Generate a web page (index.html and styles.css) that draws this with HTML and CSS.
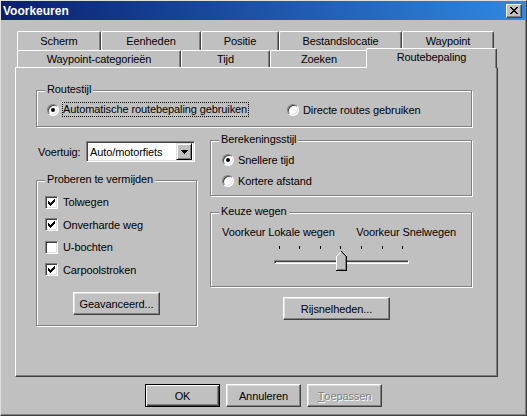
FILE: index.html
```html
<!DOCTYPE html>
<html lang="nl">
<head>
    <meta charset="UTF-8">
    <title>Voorkeuren</title>
    <link rel="stylesheet" href="styles.css">
</head>
<body>
<div class="window">
    <div class="titlebar">
        <span class="title">Voorkeuren</span>
        <span class="close-btn">
            <svg width="8" height="7" viewBox="0 0 8 7"><path d="M0 0h2v1h-2z M6 0h2v1h-2z M1 1h2v1h-2z M5 1h2v1h-2z M2 2h4v1h-4z M3 3h2v1h-2z M2 4h4v1h-4z M1 5h2v1h-2z M5 5h2v1h-2z M0 6h2v1h-2z M6 6h2v1h-2z"/></svg>
        </span>
    </div>

    <div class="tabs">
        <!-- achterste rij -->
        <div class="tab-row back">
            <div class="tab tab-scherm">Scherm</div>
            <div class="tab tab-eenheden">Eenheden</div>
            <div class="tab tab-positie">Positie</div>
            <div class="tab tab-locatie">Bestandslocatie</div>
            <div class="tab tab-waypoint">Waypoint</div>
        </div>
        <!-- voorste rij -->
        <div class="tab-row front">
            <div class="tab tab-categorie">Waypoint-categorieën</div>
            <div class="tab tab-tijd">Tijd</div>
            <div class="tab tab-zoeken">Zoeken</div>
            <div class="tab tab-route active">Routebepaling</div>
        </div>

        <div class="panel">
            <div class="group route-style">
                <span class="legend">Routestijl</span>
                <div class="option wide"><span class="radio checked"></span><span class="focus">Automatische routebepaling gebruiken</span></div>
                <div class="option"><span class="radio"></span>Directe routes gebruiken</div>
            </div>

            <div class="columns">
                <div class="col-left">
                    <div class="vehicle">
                        <span class="vehicle-label">Voertuig:</span>
                        <div class="select">
                            <span class="select-value">Auto/motorfiets</span>
                            <span class="select-btn">
                                <svg width="7" height="4" viewBox="0 0 7 4"><path d="M0 0h7v1h-7z M1 1h5v1h-5z M2 2h3v1h-3z M3 3h1v1h-1z"/></svg>
                            </span>
                        </div>
                    </div>

                    <div class="group avoid">
                        <span class="legend">Proberen te vermijden</span>
                        <div class="check-row"><span class="checkbox checked"></span>Tolwegen</div>
                        <div class="check-row"><span class="checkbox checked"></span>Onverharde weg</div>
                        <div class="check-row"><span class="checkbox"></span>U-bochten</div>
                        <div class="check-row"><span class="checkbox checked"></span>Carpoolstroken</div>
                        <button class="btn btn-advanced">Geavanceerd...</button>
                    </div>
                </div>

                <div class="col-right">
                    <div class="group calc">
                        <span class="legend">Berekeningsstijl</span>
                        <div class="option"><span class="radio checked"></span>Snellere tijd</div>
                        <div class="option"><span class="radio"></span>Kortere afstand</div>
                    </div>

                    <div class="group roads">
                        <span class="legend">Keuze wegen</span>
                        <div class="slider-labels">
                            <span>Voorkeur Lokale wegen</span>
                            <span>Voorkeur Snelwegen</span>
                        </div>
                        <div class="slider">
                            <div class="ticks">
                                <i></i><i></i><i></i><i></i><i></i><i></i><i></i>
                            </div>
                            <div class="track"></div>
                            <svg class="thumb" width="11" height="20" viewBox="0 0 11 20" shape-rendering="crispEdges">
                                <path d="M0 5L5 0h1l5 5v15H0z" fill="#c0c0c0"/>
                                <path d="M0.5 19.5V5.5L5.5 0.5" fill="none" stroke="#fff"/>
                                <path d="M5.5 0.5L10.5 5.5V19.5H0" fill="none" stroke="#000"/>
                                <path d="M6 2L9.5 5.5V18.5H1" fill="none" stroke="#808080"/>
                            </svg>
                        </div>
                    </div>

                    <button class="btn btn-speeds">Rijsnelheden...</button>
                </div>
            </div>
        </div>
    </div>

    <div class="actions">
        <button class="btn default">OK</button>
        <button class="btn">Annuleren</button>
        <button class="btn disabled"><u>T</u>oepassen</button>
    </div>
</div>
</body>
</html>
```

FILE: styles.css
```css
/* basis */
* {
    margin: 0;
    padding: 0;
    box-sizing: border-box;
}

body {
    width: 527px;
    height: 416px;
    overflow: hidden;
    background: #c0c0c0;
    font-family: "Liberation Sans", Arial, sans-serif;
    font-size: 11px;
    letter-spacing: -0.1px;
    color: #000;
}

.window {
    height: 416px;
    display: flex;
    flex-direction: column;
    border: 1px solid;
    border-color: #dfdfdf #404040 #404040 #dfdfdf;
    box-shadow: inset -1px -1px #808080;
}

/* titelbalk */
.titlebar {
    height: 19px;
    margin-right: 1px;
    padding: 0 3px 0 2px;
    display: flex;
    align-items: center;
    justify-content: space-between;
    background: linear-gradient(to right, #0a1f6e, #3088e0);
}

.title {
    color: #fff;
    font-size: 12px;
    font-weight: bold;
    letter-spacing: 0;
}

.close-btn {
    width: 16px;
    height: 14px;
    display: flex;
    align-items: center;
    justify-content: center;
    padding-right: 1px;
    background: #c0c0c0;
    border: 1px solid;
    border-color: #fff #404040 #404040 #fff;
    box-shadow: inset -1px -1px #808080;
}

/* tabbladen */
.tabs {
    width: 483px;
    margin: 11px 0 0 14px;
}

.tab-row {
    display: flex;
    padding: 0 2px;
}

.tab-row.back {
    height: 19px;
}

.tab-row.front {
    height: 17px;
}

.tab {
    display: flex;
    align-items: center;
    justify-content: center;
    background: #c0c0c0;
    border-top: 1px solid #fff;
    border-left: 1px solid #fff;
    border-right: 1px solid #404040;
    border-radius: 2px 2px 0 0;
    box-shadow: inset -1px 0 #808080;
    white-space: nowrap;
}

.tab-scherm { width: 84px; }
.tab-eenheden { width: 100px; }
.tab-positie { width: 78px; }
.tab-locatie { width: 123px; }
.tab-waypoint { width: 92px; }
.tab-categorie { width: 164px; }
.tab-tijd { width: 89px; }
.tab-zoeken { width: 98px; }
.tab-route { width: 127px; }

.tab.active {
    position: relative;
    z-index: 1;
    width: 131px;
    height: 20px;
    margin: -2px -2px 0 -2px;
    align-self: flex-start;
    padding-bottom: 3px;
}

.panel {
    height: 310px;
    padding: 22px 0 0 20px;
    border: 1px solid;
    border-color: #fff #404040 #404040 #fff;
    box-shadow: inset -1px -1px #808080;
}

/* groepsvakken */
.group {
    position: relative;
    border: 1px solid #808080;
    box-shadow: inset 1px 1px #fff, 1px 1px #fff;
}

.legend {
    position: absolute;
    top: -8px;
    left: 8px;
    padding: 0 2px;
    line-height: 13px;
    background: #c0c0c0;
}

.option {
    display: flex;
    align-items: center;
}

.radio {
    position: relative;
    flex: none;
    width: 12px;
    height: 12px;
    margin-right: 4px;
    border-radius: 50%;
    background: #fff;
    border: 1px solid;
    border-color: #808080 #fff #fff #808080;
    box-shadow: inset 1px 1px #404040, inset -1px -1px #dfdfdf;
}

.radio.checked::after {
    content: "";
    position: absolute;
    left: 3px;
    top: 3px;
    width: 4px;
    height: 4px;
    border-radius: 50%;
    background: #000;
}

.route-style {
    width: 436px;
    height: 37px;
    padding: 11px 0 0 10px;
    display: flex;
}

.route-style .option {
    height: 15px;
}

.route-style .wide {
    width: 240px;
}

.focus {
    margin-left: -1px;
    padding-right: 1px;
    line-height: 13px;
    border: 1px dotted #000;
}

.columns {
    display: flex;
    gap: 13px;
    margin-top: 13px;
}

.col-left {
    width: 161px;
    padding-top: 1px;
}

.col-right {
    width: 262px;
}

/* voertuig */
.vehicle {
    display: flex;
    align-items: center;
    height: 21px;
}

.vehicle-label {
    width: 50px;
    padding-left: 2px;
}

.select {
    width: 109px;
    height: 21px;
    display: flex;
    align-items: center;
    padding: 2px;
    background: #fff;
    border: 1px solid;
    border-color: #808080 #fff #fff #808080;
    box-shadow: inset 1px 1px #404040, inset -1px -1px #dfdfdf;
}

.select-value {
    flex: 1;
    padding-left: 1px;
}

.select-btn {
    width: 16px;
    height: 17px;
    display: flex;
    align-items: center;
    justify-content: center;
    background: #c0c0c0;
    border: 1px solid;
    border-color: #dfdfdf #000 #000 #dfdfdf;
    box-shadow: inset 1px 1px #fff, inset -1px -1px #808080;
}

/* vermijden */
.avoid {
    width: 161px;
    margin-top: 18px;
    padding: 10px 0 10px 8px;
    display: flex;
    flex-direction: column;
}

.check-row {
    height: 22.5px;
    display: flex;
    align-items: center;
}

.checkbox {
    flex: none;
    width: 13px;
    height: 13px;
    margin-right: 5px;
    background: #fff;
    border: 1px solid;
    border-color: #808080 #fff #fff #808080;
    box-shadow: inset 1px 1px #404040, inset -1px -1px #dfdfdf;
}

.checkbox.checked {
    background: #fff url("data:image/svg+xml,%3Csvg xmlns='http://www.w3.org/2000/svg' width='7' height='7'%3E%3Cpath d='M0 2h1v3H0z M1 3h1v3H1z M2 4h1v3H2z M3 3h1v3H3z M4 2h1v3H4z M5 1h1v3H5z M6 0h1v3H6z'/%3E%3C/svg%3E") no-repeat 2px 2px;
}

/* knoppen */
.btn {
    width: 75px;
    height: 23px;
    display: flex;
    align-items: center;
    justify-content: center;
    font: inherit;
    letter-spacing: inherit;
    color: #000;
    background: #c0c0c0;
    border: 1px solid;
    border-color: #fff #404040 #404040 #fff;
    box-shadow: inset -1px -1px #808080, inset 1px 1px #dfdfdf;
}

.btn.default {
    border-color: #000;
    box-shadow: inset 1px 1px #fff, inset -1px -1px #404040, inset -2px -2px #808080;
}

.btn.disabled {
    color: #808080;
    text-shadow: 1px 1px #fff;
}

.btn-advanced {
    width: 87px;
    margin-top: 11px;
    align-self: center;
    margin-left: -8px;
}

.btn-speeds {
    width: 107px;
    margin: 10px 0 0 73px;
}

/* berekening */
.calc {
    height: 56px;
    padding: 8px 0 0 11px;
}

.calc .option {
    height: 21px;
}

/* keuze wegen */
.roads {
    margin-top: 16px;
    padding: 13px 0 15px;
}

.slider-labels {
    display: flex;
    justify-content: space-between;
    padding: 0 15px 0 11px;
    line-height: 13px;
}

.slider {
    position: relative;
    width: 135px;
    margin: 7px auto 0;
    padding-bottom: 7px;
}

.ticks {
    height: 3px;
    padding: 0 5px;
    display: flex;
    justify-content: space-between;
}

.ticks i {
    width: 1px;
    background: #000;
}

.track {
    height: 4px;
    margin-top: 11px;
    border: 1px solid;
    border-color: #808080 #fff #fff #808080;
    box-shadow: inset 1px 1px #404040, inset -1px -1px #dfdfdf;
}

.thumb {
    position: absolute;
    left: 62px;
    top: 5px;
}

/* onderste knoppen */
.actions {
    display: flex;
    justify-content: center;
    gap: 6px;
    margin-top: 7px;
}
```
